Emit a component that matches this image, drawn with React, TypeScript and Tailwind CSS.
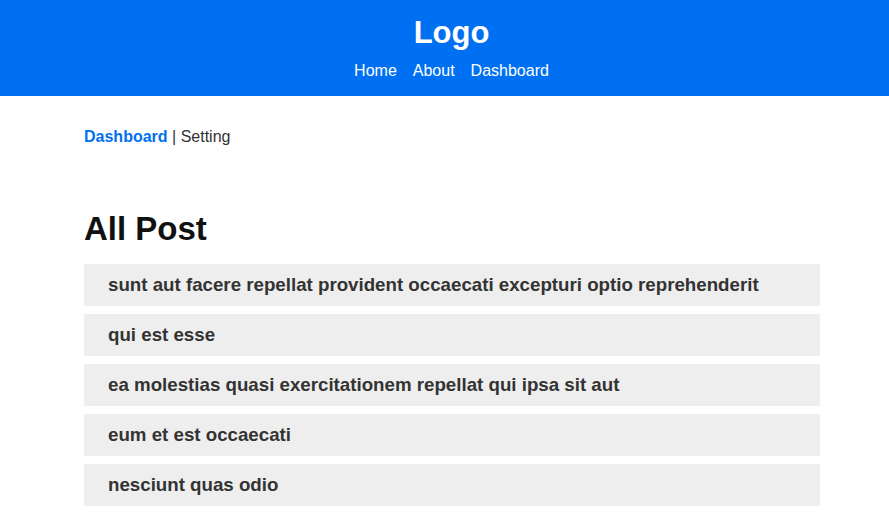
import React from "react";

const posts = [
  "sunt aut facere repellat provident occaecati excepturi optio reprehenderit",
  "qui est esse",
  "ea molestias quasi exercitationem repellat qui ipsa sit aut",
  "eum et est occaecati",
  "nesciunt quas odio",
];

export default function App() {
  return (
    <div className="min-h-screen bg-white" style={{ fontFamily: '"Liberation Sans", Arial, sans-serif' }}>
      <header className="h-[96px] bg-[#0070f3] flex flex-col items-center pt-[15px] pl-[14px]">
        <div className="text-[31px] leading-[36px] font-bold text-white">Logo</div>
        <nav className="mt-[11px] flex gap-4 text-[16px] leading-[18px] text-white">
          <a>Home</a>
          <a>About</a>
          <a>Dashboard</a>
        </nav>
      </header>
      <main className="ml-[84px] w-[736px]">
        <div className="mt-[32px] text-[16px] leading-[18px] text-[#333]">
          <span className="font-bold text-[#0070f3]">Dashboard</span> | Setting
        </div>
        <h1 className="mt-[64px] text-[33px] leading-[38px] font-bold text-[#111]">All Post</h1>
        <ul className="mt-[16px] flex flex-col gap-[8px]">
          {posts.map((p) => (
            <li key={p} className="h-[42px] bg-[#eeeeee] flex items-center pl-[24px] text-[18.72px] font-bold text-[#333]">
              {p}
            </li>
          ))}
        </ul>
      </main>
    </div>
  );
}
